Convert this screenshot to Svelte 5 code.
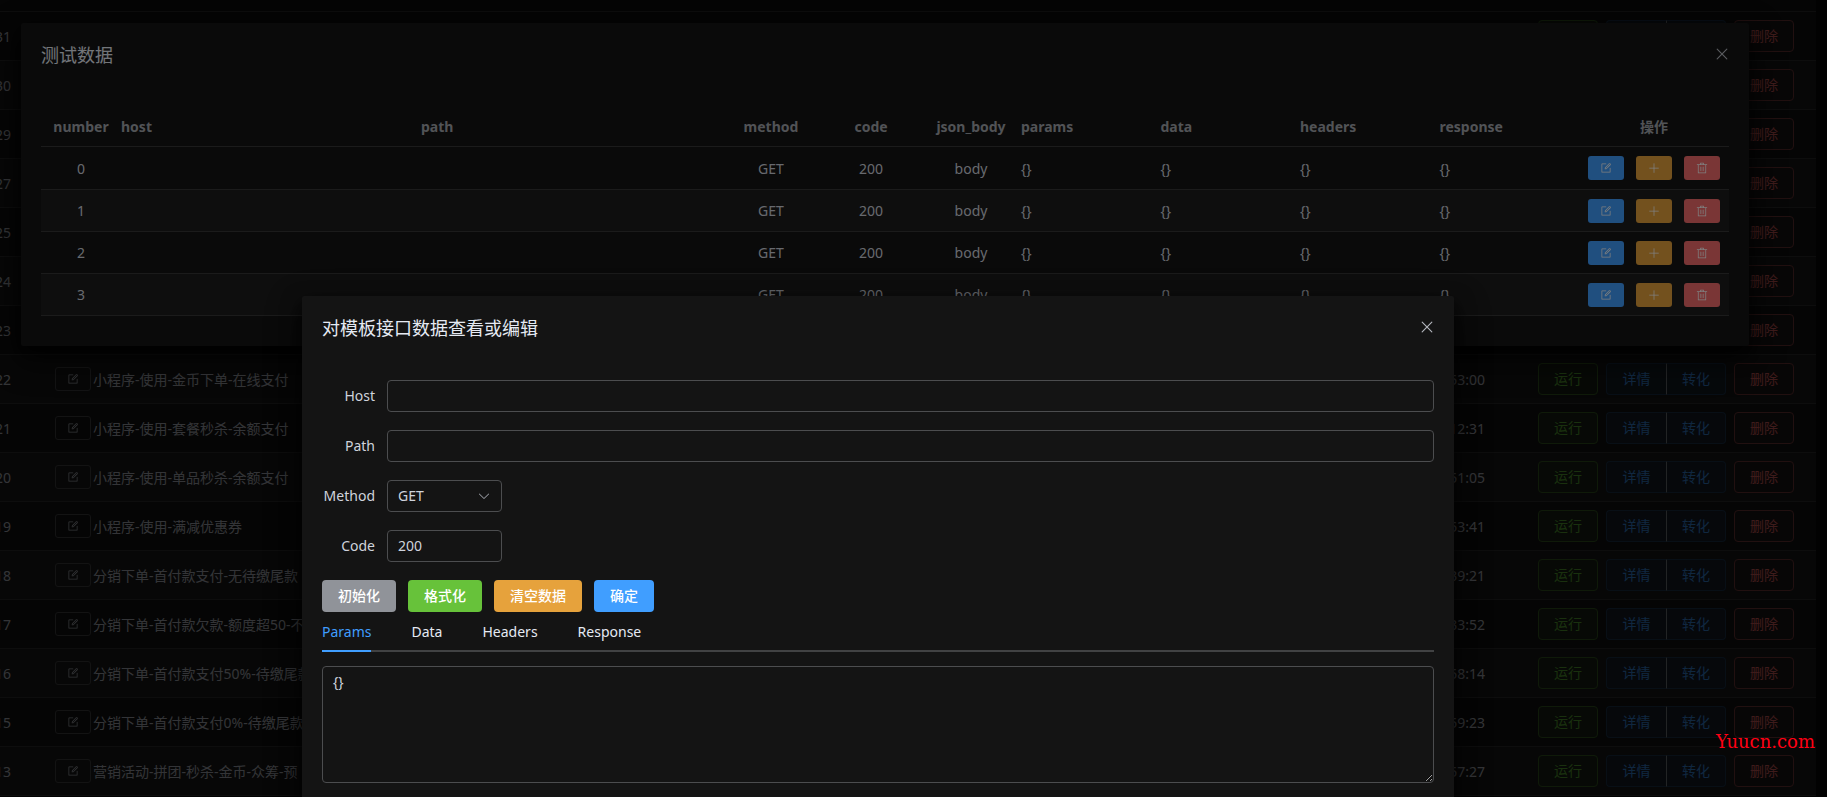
<script lang="ts">
	interface Task {
		id: string;
		name: string;
		time: string;
	}

	interface Api {
		host: string;
		path: string;
		method: string;
		code: number;
		body: string;
	}

	const icons = {
		edit: 'M832 512a32 32 0 1 1 64 0v352a32 32 0 0 1-32 32H160a32 32 0 0 1-32-32V160a32 32 0 0 1 32-32h352a32 32 0 0 1 0 64H192v640h640V512z m-362.048 42.24 52.8-7.552L847.104 222.4a32 32 0 1 0-45.248-45.248L477.44 501.44l-7.552 52.8zm422.4-422.4a96 96 0 0 1 0 135.808l-331.84 331.84a32 32 0 0 1-18.112 9.088L436.8 623.68a32 32 0 0 1-36.224-36.224l15.104-105.6a32 32 0 0 1 9.024-18.112l331.904-331.84a96 96 0 0 1 135.744 0z',
		plus: 'M480 480V128a32 32 0 0 1 64 0v352h352a32 32 0 1 1 0 64H544v352a32 32 0 1 1-64 0V544H128a32 32 0 0 1 0-64h352z',
		trash: 'M160 256H96a32 32 0 0 1 0-64h256V95.936a32 32 0 0 1 32-32h256a32 32 0 0 1 32 32V192h256a32 32 0 1 1 0 64h-64v672a32 32 0 0 1-32 32H192a32 32 0 0 1-32-32V256zm448-64v-64H416v64h192zM224 896h576V256H224v640zm192-128a32 32 0 0 1-32-32V416a32 32 0 0 1 64 0v320a32 32 0 0 1-32 32zm192 0a32 32 0 0 1-32-32V416a32 32 0 0 1 64 0v320a32 32 0 0 1-32 32z',
		close: 'M764.288 214.592 512 466.88 259.712 214.592a31.936 31.936 0 0 0-45.12 45.12L466.752 512 214.528 764.224a31.936 31.936 0 1 0 45.12 45.184L512 557.184l252.288 252.288a31.936 31.936 0 0 0 45.12-45.12L557.12 512.064l252.288-252.352a31.936 31.936 0 1 0-45.12-45.184z',
		down: 'M831.872 340.864 512 652.672 192.128 340.864a30.592 30.592 0 0 0-42.752 0 29.12 29.12 0 0 0 0 41.6L489.664 714.24a32 32 0 0 0 44.672 0l340.288-331.712a29.12 29.12 0 0 0 0-41.728 30.592 30.592 0 0 0-42.752 0z'
	};

	const tasks: Task[] = [
		{ id: '31', name: '', time: '' },
		{ id: '30', name: '', time: '' },
		{ id: '29', name: '', time: '' },
		{ id: '27', name: '', time: '' },
		{ id: '25', name: '', time: '' },
		{ id: '24', name: '', time: '' },
		{ id: '23', name: '', time: '' },
		{ id: '22', name: '小程序-使用-金币下单-在线支付', time: '53:00' },
		{ id: '21', name: '小程序-使用-套餐秒杀-余额支付', time: '12:31' },
		{ id: '20', name: '小程序-使用-单品秒杀-余额支付', time: '51:05' },
		{ id: '19', name: '小程序-使用-满减优惠券', time: '53:41' },
		{ id: '18', name: '分销下单-首付款支付-无待缴尾款', time: '39:21' },
		{ id: '17', name: '分销下单-首付款欠款-额度超50-不', time: '33:52' },
		{ id: '16', name: '分销下单-首付款支付50%-待缴尾款', time: '58:14' },
		{ id: '15', name: '分销下单-首付款支付0%-待缴尾款', time: '59:23' },
		{ id: '13', name: '营销活动-拼团-秒杀-金币-众筹-预', time: '57:27' }
	];

	const apis: Api[] = Array.from({ length: 4 }, () => ({
		host: '',
		path: '',
		method: 'GET',
		code: 200,
		body: 'body'
	}));

	const tabs = ['Params', 'Data', 'Headers', 'Response'];

	let activeTab = $state('Params');
	let form = $state({ host: '', path: '', method: 'GET', code: '200' });
	let content = $state('{}');
</script>

{#snippet icon(path: string)}
	<svg class="icon" viewBox="0 0 1024 1024" aria-hidden="true"><path d={path} /></svg>
{/snippet}

<div class="page">
	<div class="task-list">
		<table class="task-table">
			<colgroup>
				<col class="w-80" />
				<col />
				<col class="w-200" />
				<col class="w-300" />
			</colgroup>
			<tbody>
				{#each tasks as task}
					<tr>
						<td class="center">{task.id}</td>
						<td>
							<div class="name">
								<button class="btn small plain" aria-label="edit">{@render icon(icons.edit)}</button>
								<span>{task.name}</span>
							</div>
						</td>
						<td class="time">{task.time}</td>
						<td>
							<div class="actions">
								<button class="btn success-plain">运行</button>
								<div class="btn-group">
									<button class="btn primary-plain">详情</button>
									<button class="btn primary-plain">转化</button>
								</div>
								<button class="btn danger-plain">删除</button>
							</div>
						</td>
					</tr>
				{/each}
			</tbody>
		</table>
	</div>

	<div class="overlay">
		<section class="dialog data-dialog" role="dialog" aria-labelledby="data-title">
			<header>
				<h2 id="data-title">测试数据</h2>
				<button class="close" aria-label="close">{@render icon(icons.close)}</button>
			</header>
			<table class="data-table">
				<colgroup>
					<col class="w-80" />
					<col class="w-300" />
					<col class="w-300" />
					<col class="w-100" />
					<col class="w-100" />
					<col class="w-100" />
					<col />
					<col />
					<col />
					<col />
					<col class="w-150" />
				</colgroup>
				<thead>
					<tr>
						<th class="center">number</th>
						<th>host</th>
						<th>path</th>
						<th class="center">method</th>
						<th class="center">code</th>
						<th class="center">json_body</th>
						<th>params</th>
						<th>data</th>
						<th>headers</th>
						<th>response</th>
						<th class="center">操作</th>
					</tr>
				</thead>
				<tbody>
					{#each apis as api, i}
						<tr>
							<td class="center">{i}</td>
							<td>{api.host}</td>
							<td>{api.path}</td>
							<td class="center">{api.method}</td>
							<td class="center">{api.code}</td>
							<td class="center">{api.body}</td>
							<td>{'{}'}</td>
							<td>{'{}'}</td>
							<td>{'{}'}</td>
							<td>{'{}'}</td>
							<td>
								<div class="row-buttons">
									<button class="btn small primary" aria-label="edit">{@render icon(icons.edit)}</button>
									<button class="btn small warning" aria-label="add">{@render icon(icons.plus)}</button>
									<button class="btn small danger" aria-label="delete">{@render icon(icons.trash)}</button>
								</div>
							</td>
						</tr>
					{/each}
				</tbody>
			</table>
		</section>
	</div>

	<div class="overlay">
		<section class="dialog edit-dialog" role="dialog" aria-labelledby="edit-title">
			<header>
				<h2 id="edit-title">对模板接口数据查看或编辑</h2>
				<button class="close" aria-label="close">{@render icon(icons.close)}</button>
			</header>
			<div class="form">
				<div class="form-item">
					<label for="host">Host</label>
					<input id="host" type="text" bind:value={form.host} />
				</div>
				<div class="form-item">
					<label for="path">Path</label>
					<input id="path" type="text" bind:value={form.path} />
				</div>
				<div class="form-item">
					<label for="method">Method</label>
					<div class="select">
						<select id="method" bind:value={form.method}>
							<option>GET</option>
							<option>POST</option>
							<option>PUT</option>
							<option>DELETE</option>
						</select>
						{@render icon(icons.down)}
					</div>
				</div>
				<div class="form-item">
					<label for="code">Code</label>
					<input id="code" class="short" type="text" bind:value={form.code} />
				</div>
			</div>
			<div class="buttons">
				<button class="btn info">初始化</button>
				<button class="btn success">格式化</button>
				<button class="btn warning">清空数据</button>
				<button class="btn primary">确定</button>
			</div>
			<div class="tabs" role="tablist">
				{#each tabs as tab}
					<button
						class="tab"
						class:active={activeTab === tab}
						role="tab"
						aria-selected={activeTab === tab}
						onclick={() => (activeTab = tab)}>{tab}</button
					>
				{/each}
			</div>
			<textarea rows="5" aria-label={activeTab} bind:value={content}></textarea>
		</section>
	</div>

	<a class="watermark" href="#top">Yuucn.com</a>
</div>

<style>
	:global(body) {
		background: #0a0a0a;
	}

	.page {
		position: relative;
		height: 100vh;
		overflow: hidden;
		background: #0a0a0a;
		color: #cfd3dc;
		font-family: 'Noto Sans', 'Noto Sans CJK SC', sans-serif;
		font-size: 14px;
		line-height: 23px;
	}

	button,
	input,
	select,
	textarea {
		box-sizing: border-box;
		margin: 0;
		font: inherit;
		color: inherit;
	}

	.icon {
		width: 12px;
		height: 12px;
		fill: currentColor;
		flex-shrink: 0;
	}

	table {
		width: 100%;
		table-layout: fixed;
		border-collapse: separate;
		border-spacing: 0;
	}

	.center {
		text-align: center;
	}

	.w-80 {
		width: 80px;
	}

	.w-100 {
		width: 100px;
	}

	.w-150 {
		width: 150px;
	}

	.w-200 {
		width: 200px;
	}

	.w-300 {
		width: 300px;
	}

	/* task list, scrolled under the dialogs */
	.task-list {
		margin: 0 11px 0 -37px;
		padding-top: 11px;
		background: #141414;
	}

	.task-table {
		border-top: 1px solid #363637;
	}

	.task-table td {
		height: 48px;
		padding: 0;
		border-bottom: 1px solid #363637;
	}

	.task-table tr:nth-child(even) {
		background: #1d1d1d;
	}

	.name {
		display: flex;
		align-items: center;
		gap: 2px;
		padding-left: 12px;
		white-space: nowrap;
	}

	.task-table .time {
		padding-right: 31px;
		text-align: right;
	}

	.actions {
		display: flex;
		justify-content: center;
		gap: 8px;
	}

	.btn {
		display: inline-flex;
		align-items: center;
		justify-content: center;
		height: 32px;
		padding: 0 15px;
		border: 1px solid transparent;
		border-radius: 4px;
		line-height: 14px;
		white-space: nowrap;
		cursor: pointer;
	}

	.btn.small {
		width: 36px;
		height: 24px;
		padding: 0;
		border-radius: 3px;
	}

	.plain {
		background: transparent;
		border-color: #4c4d4f;
	}

	.success-plain {
		background: #1c2518;
		border-color: #3e6b27;
		color: #67c23a;
	}

	.primary-plain {
		background: #18222c;
		border-color: #213d5b;
		color: #409eff;
	}

	.danger-plain {
		background: #1f1a1a;
		border-color: #854040;
		color: #f56c6c;
	}

	.btn-group {
		display: flex;
	}

	.btn-group .btn:first-child {
		border-right: 0;
		border-radius: 4px 0 0 4px;
	}

	.btn-group .btn:last-child {
		border-left-color: #8a9097;
		border-radius: 0 4px 4px 0;
	}

	.btn-group .btn {
		width: 60px;
	}

	.primary {
		background: #409eff;
		color: #fff;
	}

	.success {
		background: #67c23a;
		color: #fff;
	}

	.warning {
		background: #e6a23c;
		color: #fff;
	}

	.danger {
		background: #f56c6c;
		color: #fff;
	}

	.info {
		background: #909399;
		color: #fff;
	}

	/* dialogs */
	.overlay {
		position: absolute;
		inset: 0;
		display: flow-root;
		overflow: hidden;
		background: rgba(0, 0, 0, 0.5);
	}

	.dialog {
		padding: 20px 20px 30px;
		border-radius: 2px;
		background: #141414;
		box-shadow:
			0 12px 32px 4px rgba(0, 0, 0, 0.36),
			0 8px 20px rgba(0, 0, 0, 0.72);
	}

	.data-dialog {
		margin: 23px 78px 0 21px;
	}

	.edit-dialog {
		margin: 296px 373px 0 302px;
	}

	header {
		display: flex;
		justify-content: space-between;
		margin-bottom: 40px;
	}

	h2 {
		margin: 0;
		color: #e5eaf3;
		font-size: 18px;
		font-weight: 400;
		line-height: 24px;
	}

	.close {
		display: flex;
		width: 16px;
		height: 24px;
		padding: 2px 0 0;
		border: 0;
		background: none;
		color: #b4b7be;
		cursor: pointer;
	}

	.close .icon {
		width: 18px;
		height: 18px;
	}

	th {
		height: 39px;
		padding: 0;
		border-bottom: 1px solid #363637;
		color: #a3a6ad;
		font-weight: 700;
		text-align: left;
	}

	th.center {
		text-align: center;
	}

	.data-table td {
		height: 41px;
		padding: 0;
		border-bottom: 1px solid #363637;
	}

	.data-table tbody tr:first-child td {
		height: 42px;
	}

	.data-table tbody tr:nth-child(even) {
		background: #1d1d1d;
	}

	.row-buttons {
		display: flex;
		justify-content: center;
		gap: 12px;
	}

	.form {
		display: grid;
		gap: 18px;
		margin-bottom: 18px;
	}

	.form-item {
		display: grid;
		grid-template-columns: 53px 1fr;
		align-items: center;
		gap: 12px;
	}

	label {
		padding-bottom: 2px;
		text-align: right;
	}

	input,
	select,
	textarea {
		width: 100%;
		border: 1px solid #4c4d4f;
		border-radius: 4px;
		background: #141414;
		outline: none;
	}

	input,
	select {
		height: 32px;
		padding: 0 10px 2px;
	}

	input.short,
	.select {
		width: 115px;
	}

	.select {
		display: grid;
		align-items: center;
	}

	.select select,
	.select .icon {
		grid-area: 1 / 1;
	}

	.select select {
		appearance: none;
	}

	.select .icon {
		justify-self: end;
		width: 14px;
		height: 14px;
		margin-right: 11px;
		color: #a3a6ad;
		pointer-events: none;
	}

	.buttons {
		display: flex;
		gap: 12px;
	}

	.buttons .btn {
		font-weight: 500;
	}

	.tabs {
		display: flex;
		gap: 40px;
		height: 40px;
		margin-bottom: 14px;
		box-shadow: inset 0 -2px #414243;
	}

	.tab {
		padding: 0;
		border: 0;
		border-bottom: 2px solid transparent;
		background: none;
		color: #e5eaf3;
		cursor: pointer;
	}

	.tab.active {
		border-bottom-color: #409eff;
		color: #409eff;
	}

	textarea {
		display: block;
		padding: 4px 10px 6px;
		line-height: 21px;
		resize: vertical;
	}

	.watermark {
		position: absolute;
		right: 12px;
		bottom: 43px;
		color: #ff0014;
		font-family: 'DejaVu Serif', serif;
		font-size: 18px;
		line-height: 24px;
		text-decoration: none;
	}
</style>
